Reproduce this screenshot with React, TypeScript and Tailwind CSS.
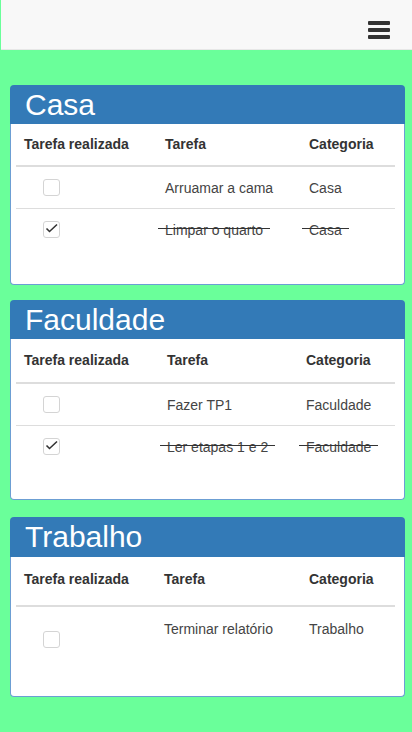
import React from 'react';

type Task = { name: string; category: string; done: boolean };

type Panel = {
  title: string;
  cols: string;
  headerH: string;
  headerRow: string;
  bodyH: string;
  rowAlign: 'middle' | 'top';
  tasks: Task[];
};

const panels: Panel[] = [
  {
    title: 'Casa',
    cols: 'grid-cols-[141px_144px_1fr]',
    headerH: 'h-[39px]',
    headerRow: 'h-[43px] pb-[1px]',
    bodyH: 'h-[161px]',
    rowAlign: 'middle',
    tasks: [
      { name: 'Arruamar a cama', category: 'Casa', done: false },
      { name: 'Limpar o quarto', category: 'Casa', done: true },
    ],
  },
  {
    title: 'Faculdade',
    cols: 'grid-cols-[143px_139px_1fr]',
    headerH: 'h-[39px]',
    headerRow: 'h-[45px] pb-[1px]',
    bodyH: 'h-[161px]',
    rowAlign: 'middle',
    tasks: [
      { name: 'Fazer TP1', category: 'Faculdade', done: false },
      { name: 'Ler etapas 1 e 2', category: 'Faculdade', done: true },
    ],
  },
  {
    title: 'Trabalho',
    cols: 'grid-cols-[140px_145px_1fr]',
    headerH: 'h-[40px]',
    headerRow: 'h-[50px] pb-[4px]',
    bodyH: 'h-[140px]',
    rowAlign: 'top',
    tasks: [{ name: 'Terminar relatório', category: 'Trabalho', done: false }],
  },
];

const Checkbox = ({ checked }: { checked: boolean }) => (
  <div className="w-[17px] h-[17px] rounded-[3px] border border-[#d4d4d4] bg-white">
    {checked && (
      <svg width="15" height="15" viewBox="0 0 15 15">
        <path d="M2.5 6.5 L5.5 9.5 L13 2.5" fill="none" stroke="#333" strokeWidth="1.6" />
      </svg>
    )}
  </div>
);

// strike line runs a bit past the text on both sides, like the original page
const Struck = ({ text }: { text: string }) => (
  <span className="relative inline-block leading-[20px]">
    {text}
    <span className="absolute left-[-7px] right-[-7px] top-[8px] h-px bg-[#333]" />
  </span>
);

const TaskPanel = ({ panel, last }: { panel: Panel; last: boolean }) => (
  <div className={`ml-[10px] mr-[7px] ${last ? '' : panel.title === 'Casa' ? 'mb-[15px]' : 'mb-[17px]'}`}>
    <div
      className={`${panel.headerH} bg-[#337ab7] rounded-t-[4px] px-[15px] text-white text-[30px] leading-[39px]`}
    >
      {panel.title}
    </div>
    <div
      className={`${panel.bodyH} bg-white border-x border-b border-[#6c9ed3] rounded-b-[4px] pl-[5px] pr-[9px]`}
    >
      <div
        className={`grid ${panel.cols} ${panel.headerRow} items-center border-b-2 border-[#dddddd] font-bold text-[#333] text-[14px]`}
      >
        <div className="pl-[8px]">Tarefa realizada</div>
        <div className="pl-[8px]">Tarefa</div>
        <div className="pl-[8px]">Categoria</div>
      </div>
      {panel.tasks.map((t, i) => (
        <div
          key={t.name}
          className={`grid ${panel.cols} text-[14px] text-[#444] ${
            panel.rowAlign === 'top' ? 'items-start h-[66px]' : 'items-center h-[41px]'
          } ${i > 0 ? 'border-t border-[#dddddd] h-[42px]' : ''}`}
        >
          <div className={`pl-[27px] ${panel.rowAlign === 'top' ? 'pt-[24px]' : ''}`}>
            <Checkbox checked={t.done} />
          </div>
          <div className={`pl-[8px] leading-[20px] ${panel.rowAlign === 'top' ? 'pt-[12px]' : ''}`}>
            {t.done ? <Struck text={t.name} /> : t.name}
          </div>
          <div className={`pl-[8px] leading-[20px] ${panel.rowAlign === 'top' ? 'pt-[12px]' : ''}`}>
            {t.done ? <Struck text={t.category} /> : t.category}
          </div>
        </div>
      ))}
    </div>
  </div>
);

export default function App() {
  return (
    <div className="min-h-screen bg-[#6aff9a] font-['Liberation_Sans',Arial,sans-serif]">
      <nav className="h-[50px] ml-px bg-[#f8f8f8] border-b border-[#e7e7e7] flex justify-end pt-[21px] pr-[22px]">
        <button className="flex flex-col gap-[3px]" aria-label="menu">
          <span className="block w-[22px] h-[4px] rounded-[1px] bg-[#333]" />
          <span className="block w-[22px] h-[4px] rounded-[1px] bg-[#333]" />
          <span className="block w-[22px] h-[4px] rounded-[1px] bg-[#333]" />
        </button>
      </nav>
      <main className="pt-[35px] pb-[35px]">
        {panels.map((p, i) => (
          <TaskPanel key={p.title} panel={p} last={i === panels.length - 1} />
        ))}
      </main>
    </div>
  );
}
